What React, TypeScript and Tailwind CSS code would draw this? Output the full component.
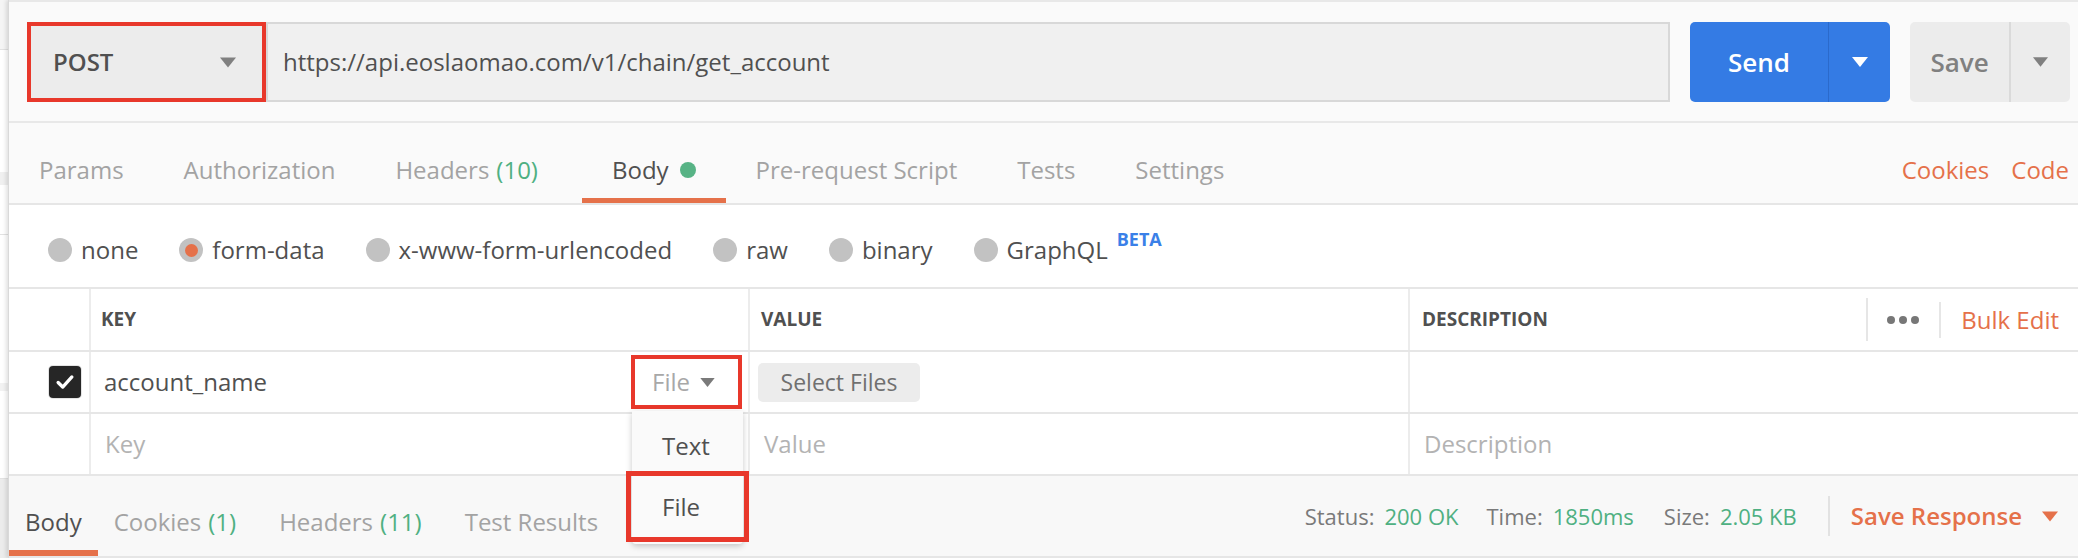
import React from 'react'

const orange = 'text-[#e5714a]'

function Caret({ className }: { className?: string }) {
  return (
    <svg viewBox="0 0 16 10" className={className} fill="currentColor">
      <polygon points="0,0 16,0 8,10" />
    </svg>
  )
}

function Radio({ label, checked }: { label: React.ReactNode; checked?: boolean }) {
  return (
    <div className="flex items-center gap-[9px]">
      <span className="flex h-[24px] w-[24px] items-center justify-center rounded-full bg-[#c2c2c2]">
        {checked && <span className="h-[13px] w-[13px] rounded-full bg-[#e5714a]" />}
      </span>
      <span className="text-[24px] text-[#505050]">{label}</span>
    </div>
  )
}

function Tab({ children, active }: { children: React.ReactNode; active?: boolean }) {
  return (
    <div
      className={
        'flex h-full items-center px-[30px] pt-[19px] border-b-[5px] text-[24px] ' +
        (active ? 'border-[#e5714a] text-[#505050]' : 'border-transparent text-[#a3a3a3]')
      }
    >
      {children}
    </div>
  )
}

function FileSelect() {
  return (
    <div className="relative">
      <div className="flex h-[54px] w-[111px] items-center gap-[10px] border-[4px] border-[#e8382b] pl-[17px] bg-white">
        <span className="text-[24px] text-[#a8a8a8]">File</span>
        <Caret className="h-[9px] w-[15px] text-[#7a7a7a]" />
      </div>
      {/* open type menu */}
      <div className="absolute left-[1px] top-full z-10 mt-[2px] w-[111px] rounded-b-[4px] bg-[#fafafa] pb-[2px] shadow-[0_2px_6px_rgba(0,0,0,0.22)]">
        <div className="flex h-[60px] items-center pl-[30px] pt-[10px] text-[24px] text-[#505050]">Text</div>
        <div className="-mx-[6px] flex h-[71px] items-center border-[5px] border-[#e8382b] pl-[31px] text-[24px] text-[#505050]">
          File
        </div>
      </div>
    </div>
  )
}

export default function App() {
  return (
    <div className="flex h-[558px] w-[2078px] overflow-hidden bg-[#fafafa] font-['Open_Sans',sans-serif] text-[#505050]">
      {/* sidebar edge behind the panel */}
      <div className="flex w-[8px] shrink-0 flex-col bg-white">
        <div className="h-[50px] border-b border-[#e2e2e2] bg-[#f5f5f5]" />
        <div className="h-[122px]" />
        <div className="h-[13px] bg-[#f0f0f0]" />
        <div className="h-[50px] border-b border-[#e2e2e2]" />
        <div className="h-[148px]" />
        <div className="h-[8px] bg-[#f2f2f2]" />
        <div className="h-[88px] border-b border-[#e2e2e2]" />
        <div className="flex-1 bg-[#ececec]" />
      </div>

      <main className="flex min-w-0 flex-1 flex-col border-l border-[#d9d9d9] shadow-[-2px_0_4px_rgba(0,0,0,0.12)]">
        {/* request bar */}
        <div className="flex h-[123px] shrink-0 items-start border-y-2 border-[#e8e8e8] pl-[18px] pr-[8px] pt-[20px]">
          <div className="flex h-[80px] w-[239px] items-center justify-between border-[4px] border-[#e8382b] bg-[#ececec] pl-[22px] pr-[26px]">
            <span className="text-[24px] font-semibold text-[#505050]">POST</span>
            <Caret className="h-[11px] w-[16px] text-[#808080]" />
          </div>
          <div className="flex h-[80px] flex-1 items-center border-2 border-[#d8d8d8] bg-[#f0f0f0] pl-[15px]">
            <span className="text-[24px] text-[#505050]">https://api.eoslaomao.com/v1/chain/get_account</span>
          </div>
          <div className="ml-[20px] flex h-[80px] w-[200px] overflow-hidden rounded-[5px] bg-[#347be4]">
            <div className="flex w-[138px] items-center justify-center text-[26px] font-semibold text-white">Send</div>
            <div className="w-px bg-[#2b6acb]" />
            <div className="flex flex-1 items-center justify-center">
              <Caret className="h-[10px] w-[16px] text-white" />
            </div>
          </div>
          <div className="ml-[20px] flex h-[80px] w-[160px] overflow-hidden rounded-[5px] bg-[#ececec]">
            <div className="flex w-[99px] items-center justify-center text-[26px] font-semibold text-[#808080]">Save</div>
            <div className="w-[2px] bg-[#dadada]" />
            <div className="flex flex-1 items-center justify-center">
              <Caret className="h-[10px] w-[15px] text-[#808080]" />
            </div>
          </div>
        </div>

        {/* request tabs */}
        <div className="flex h-[82px] shrink-0 items-stretch border-b-2 border-[#e6e6e6]">
          <Tab>Params</Tab>
          <Tab>Authorization</Tab>
          <Tab>
            Headers<span className="ml-[7px] text-[#4fb082]">(10)</span>
          </Tab>
          <div className="ml-[14px] flex">
            <Tab active>
              Body
              <span className="ml-[11px] h-[16px] w-[16px] rounded-full bg-[#57b385]" />
            </Tab>
          </div>
          <Tab>Pre-request Script</Tab>
          <Tab>Tests</Tab>
          <Tab>Settings</Tab>
          <div className={'ml-auto flex items-center gap-[22px] pr-[9px] pt-[14px] text-[24px] ' + orange}>
            <span>Cookies</span>
            <span>Code</span>
          </div>
        </div>

        {/* body mode */}
        <div className="flex h-[84px] shrink-0 items-center gap-[41px] border-b-2 border-[#e6e6e6] bg-white pl-[39px] pt-[8px]">
          <Radio label="none" />
          <Radio label="form-data" checked />
          <Radio label="x-www-form-urlencoded" />
          <Radio label="raw" />
          <Radio label="binary" />
          <Radio
            label={
              <span>
                GraphQL
                <sup className="-top-[13px] ml-[9px] text-[18px] font-bold text-[#3a80e8]">BETA</sup>
              </span>
            }
          />
        </div>

        {/* form-data table */}
        <div className="flex shrink-0 flex-col bg-white">
          <div className="flex h-[63px] border-b-2 border-[#e6e6e6] text-[19px] font-bold text-[#505050]">
            <div className="w-[82px] shrink-0 border-r-2 border-[#ececec]" />
            <div className="flex w-[659px] shrink-0 items-center border-r-2 border-[#ececec] pl-[10px]">KEY</div>
            <div className="flex w-[660px] shrink-0 items-center border-r-2 border-[#ececec] pl-[11px]">VALUE</div>
            <div className="flex flex-1 items-center pl-[12px]">
              <span>DESCRIPTION</span>
              <div className="ml-auto flex items-center pr-[19px]">
                <div className="h-[43px] w-[2px] bg-[#e6e6e6]" />
                <div className="ml-[19px] flex gap-[4px]">
                  <span className="h-[8px] w-[8px] rounded-full bg-[#777]" />
                  <span className="h-[8px] w-[8px] rounded-full bg-[#777]" />
                  <span className="h-[8px] w-[8px] rounded-full bg-[#777]" />
                </div>
                <div className="ml-[20px] h-[36px] w-[2px] bg-[#e6e6e6]" />
                <span className={'ml-[20px] text-[24px] font-normal ' + orange}>Bulk Edit</span>
              </div>
            </div>
          </div>

          <div className="relative z-10 flex h-[62px] border-b-2 border-[#e6e6e6]">
            <div className="flex w-[82px] shrink-0 items-center justify-end border-r-2 border-[#ececec] pr-[8px]">
              <span className="flex h-[32px] w-[32px] items-center justify-center rounded-[4px] bg-[#262626] ring-1 ring-[#e4e4e4]">
                <svg viewBox="0 0 24 24" className="h-[22px] w-[22px]" fill="none" stroke="white" strokeWidth="3.6" strokeLinecap="round" strokeLinejoin="round">
                  <path d="M4.5 12.5l5 5 10-11" />
                </svg>
              </span>
            </div>
            <div className="flex w-[659px] shrink-0 items-center justify-between border-r-2 border-[#ececec] pl-[13px] pr-[6px]">
              <span className="text-[24px] text-[#505050]">account_name</span>
              <FileSelect />
            </div>
            <div className="flex w-[660px] shrink-0 items-center border-r-2 border-[#ececec] pl-[8px]">
              <span className="flex h-[39px] w-[162px] items-center justify-center rounded-[5px] bg-[#ececec] text-[23px] text-[#707070]">
                Select Files
              </span>
            </div>
            <div className="flex-1" />
          </div>

          <div className="flex h-[62px] border-b-2 border-[#e6e6e6] text-[24px] text-[#b3b3b3]">
            <div className="w-[82px] shrink-0 border-r-2 border-[#ececec]" />
            <div className="flex w-[659px] shrink-0 items-center border-r-2 border-[#ececec] pl-[14px]">Key</div>
            <div className="flex w-[660px] shrink-0 items-center border-r-2 border-[#ececec] pl-[14px]">Value</div>
            <div className="flex flex-1 items-center pl-[14px]">Description</div>
          </div>
        </div>

        {/* response bar */}
        <div className="flex min-h-0 flex-1 items-stretch border-b-2 border-[#e6e6e6] bg-[#f8f8f8]">
          <div className="flex items-stretch text-[24px]">
            <div className="flex items-center border-b-[6px] border-[#e5714a] px-[16px] pt-[18px] text-[#505050]">Body</div>
            <div className="ml-[16px] flex items-center border-b-[6px] border-transparent pt-[18px] text-[#a3a3a3]">
              Cookies<span className="ml-[7px] text-[#4fb082]">(1)</span>
            </div>
            <div className="ml-[43px] flex items-center border-b-[6px] border-transparent pt-[18px] text-[#a3a3a3]">
              Headers<span className="ml-[7px] text-[#4fb082]">(11)</span>
            </div>
            <div className="ml-[43px] flex items-center border-b-[6px] border-transparent pt-[18px] text-[#a3a3a3]">
              Test Results
            </div>
          </div>
          <div className="ml-auto flex items-center pr-[20px] text-[22px]">
            <span className="text-[#7a7a7a]">Status:</span>
            <span className="ml-[10px] text-[#4fb082]">200 OK</span>
            <span className="ml-[28px] text-[#7a7a7a]">Time:</span>
            <span className="ml-[10px] text-[#4fb082]">1850ms</span>
            <span className="ml-[30px] text-[#7a7a7a]">Size:</span>
            <span className="ml-[10px] text-[#4fb082]">2.05 KB</span>
            <div className="ml-[31px] h-[40px] w-[2px] bg-[#e2e2e2]" />
            <span className={'ml-[21px] text-[24px] font-semibold ' + orange}>Save Response</span>
            <Caret className="ml-[20px] h-[11px] w-[16px] text-[#e5714a]" />
          </div>
        </div>
      </main>
    </div>
  )
}
